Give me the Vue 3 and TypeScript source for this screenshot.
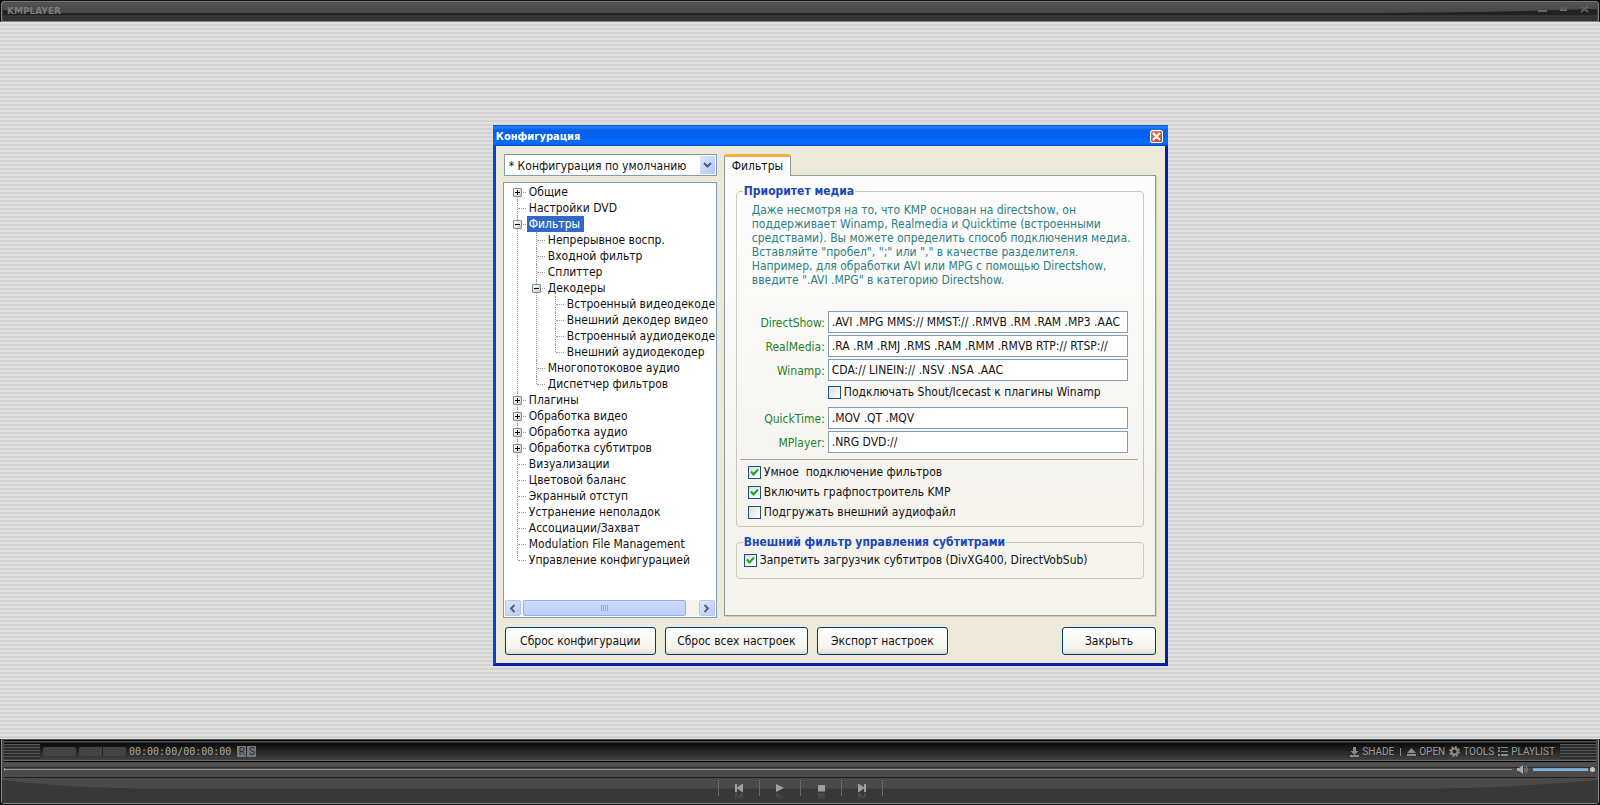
<script setup lang="ts">
import { ref, reactive } from 'vue'

interface TreeNode {
  label: string
  state?: 'open' | 'closed'
  selected?: boolean
  children?: TreeNode[]
}

const tree: TreeNode[] = [
  { label: 'Общие', state: 'closed' },
  { label: 'Настройки DVD' },
  {
    label: 'Фильтры',
    state: 'open',
    selected: true,
    children: [
      { label: 'Непрерывное воспр.' },
      { label: 'Входной фильтр' },
      { label: 'Сплиттер' },
      {
        label: 'Декодеры',
        state: 'open',
        children: [
          { label: 'Встроенный видеодекодер' },
          { label: 'Внешний декодер видео' },
          { label: 'Встроенный аудиодекодер' },
          { label: 'Внешний аудиодекодер' },
        ],
      },
      { label: 'Многопотоковое аудио' },
      { label: 'Диспетчер фильтров' },
    ],
  },
  { label: 'Плагины', state: 'closed' },
  { label: 'Обработка видео', state: 'closed' },
  { label: 'Обработка аудио', state: 'closed' },
  { label: 'Обработка субтитров', state: 'closed' },
  { label: 'Визуализации' },
  { label: 'Цветовой баланс' },
  { label: 'Экранный отступ' },
  { label: 'Устранение неполадок' },
  { label: 'Ассоциации/Захват' },
  { label: 'Modulation File Management' },
  { label: 'Управление конфигурацией' },
]

const media = reactive({
  directshow: '.AVI .MPG MMS:// MMST:// .RMVB .RM .RAM .MP3 .AAC',
  realmedia: '.RA .RM .RMJ .RMS .RAM .RMM .RMVB RTP:// RTSP://',
  winamp: 'CDA:// LINEIN:// .NSV .NSA .AAC',
  quicktime: '.MOV .QT .MQV',
  mplayer: '.NRG DVD://',
})
const shoutcast = ref(false)
const smart = ref(true)
const graph = ref(true)
const external = ref(false)
const blockLoader = ref(true)
const position = ref(0)
const volume = ref(100)
</script>

<template>
  <div class="player">
    <header class="topbar">
      <svg class="curve" viewBox="0 0 1600 20" preserveAspectRatio="none" aria-hidden="true">
        <path d="M0 9 Q30 12 60 12 H1330 Q1480 12 1600 8 V14 H0Z" fill="#222" />
        <path d="M0 14 H1600 V20 H0Z" fill="#333" />
      </svg>
      <span class="brand">KMPLAYER</span>
      <div class="winbtns">
        <button type="button" aria-label="Свернуть">
          <svg width="9" height="8" viewBox="0 0 9 8"><rect x="0" y="5" width="9" height="2" fill="#62666a" /></svg>
        </button>
        <button type="button" aria-label="Развернуть">
          <svg width="9" height="8" viewBox="0 0 9 8"><rect x="1" y="1" width="7" height="5" fill="#55595f" /><rect x="1" y="5" width="7" height="1" fill="#6b7076" /></svg>
        </button>
        <button type="button" aria-label="Выход">
          <svg width="9" height="8" viewBox="0 0 9 8"><path d="M1 1L8 7M8 1L1 7" stroke="#5e5e5e" stroke-width="2" /></svg>
        </button>
      </div>
    </header>

    <main class="stage">
      <section class="dialog" role="dialog" aria-labelledby="dlg-title">
        <div class="titlebar">
          <h1 id="dlg-title">Конфигурация</h1>
          <button type="button" class="close" aria-label="Закрыть окно">
            <svg width="9" height="9" viewBox="0 0 9 9"><path d="M1 1L8 8M8 1L1 8" stroke="#fff" stroke-width="2" /></svg>
          </button>
        </div>
        <div class="body">
          <div class="columns">
            <div class="side">
              <div class="combo">
                <select aria-label="Конфигурация">
                  <option>* Конфигурация по умолчанию</option>
                </select>
                <span class="drop">
                  <svg width="9" height="7" viewBox="0 0 9 7"><path d="M1 1L4.500 4.500L8 1" fill="none" stroke="#4d6185" stroke-width="2" /></svg>
                </span>
              </div>
              <nav class="treebox" aria-label="Разделы">
                <ul class="tree">
                  <li v-for="a in tree" :key="a.label">
                    <div class="row">
                      <button v-if="a.state" type="button" class="exp" :class="a.state" :aria-label="a.label + ': раскрыть'"></button>
                      <a href="#" :class="{ selected: a.selected }">{{ a.label }}</a>
                    </div>
                    <ul v-if="a.children">
                      <li v-for="b in a.children" :key="b.label">
                        <div class="row">
                          <button v-if="b.state" type="button" class="exp" :class="b.state" :aria-label="b.label + ': раскрыть'"></button>
                          <a href="#">{{ b.label }}</a>
                        </div>
                        <ul v-if="b.children">
                          <li v-for="c in b.children" :key="c.label">
                            <div class="row"><a href="#">{{ c.label }}</a></div>
                          </li>
                        </ul>
                      </li>
                    </ul>
                  </li>
                </ul>
                <div class="hscroll">
                  <button type="button" aria-label="Влево">
                    <svg width="7" height="9" viewBox="0 0 7 9"><path d="M5.500 1L2 4.500L5.500 8" fill="none" stroke="#4d6185" stroke-width="2" /></svg>
                  </button>
                  <div class="track"><div class="thumb"><i></i><i></i><i></i><i></i></div></div>
                  <button type="button" aria-label="Вправо">
                    <svg width="7" height="9" viewBox="0 0 7 9"><path d="M1.500 1L5 4.500L1.500 8" fill="none" stroke="#4d6185" stroke-width="2" /></svg>
                  </button>
                </div>
              </nav>
            </div>

            <div class="content">
              <div role="tablist" class="tabs">
                <button type="button" role="tab" aria-selected="true" class="tab">Фильтры</button>
              </div>
              <div class="page" role="tabpanel">
                <fieldset class="group media">
                  <legend>Приоритет медиа</legend>
                  <p class="hint">
                    Даже несмотря на то, что KMP основан на directshow, он<br />
                    поддерживает Winamp, Realmedia и Quicktime (встроенными<br />
                    средствами). Вы можете определить способ подключения медиа.<br />
                    Вставляйте "пробел", ";" или "," в качестве разделителя.<br />
                    Например, для обработки AVI или MPG с помощью Directshow,<br />
                    введите ".AVI .MPG" в категорию Directshow.
                  </p>
                  <div class="fields">
                    <label for="f-ds">DirectShow:</label>
                    <input id="f-ds" v-model="media.directshow" type="text" />
                    <label for="f-rm">RealMedia:</label>
                    <input id="f-rm" v-model="media.realmedia" type="text" />
                    <label for="f-wa">Winamp:</label>
                    <input id="f-wa" v-model="media.winamp" type="text" />
                    <label class="check shout"><input v-model="shoutcast" type="checkbox" />Подключать Shout/Icecast к плагины Winamp</label>
                    <label for="f-qt">QuickTime:</label>
                    <input id="f-qt" v-model="media.quicktime" type="text" />
                    <label for="f-mp">MPlayer:</label>
                    <input id="f-mp" v-model="media.mplayer" type="text" />
                  </div>
                  <hr />
                  <div class="checks">
                    <label class="check"><input v-model="smart" type="checkbox" />Умное&nbsp; подключение фильтров</label>
                    <label class="check"><input v-model="graph" type="checkbox" />Включить графпостроитель KMP</label>
                    <label class="check"><input v-model="external" type="checkbox" />Подгружать внешний аудиофайл</label>
                  </div>
                </fieldset>
                <fieldset class="group subs">
                  <legend>Внешний фильтр управления субтитрами</legend>
                  <label class="check"><input v-model="blockLoader" type="checkbox" />Запретить загрузчик субтитров (DivXG400, DirectVobSub)</label>
                </fieldset>
              </div>
            </div>
          </div>
          <div class="actions">
            <button type="button" class="xp reset">Сброс конфигурации</button>
            <button type="button" class="xp all">Сброс всех настроек</button>
            <button type="button" class="xp export">Экспорт настроек</button>
            <button type="button" class="xp done">Закрыть</button>
          </div>
        </div>
      </section>
    </main>

    <footer class="deck">
      <div class="display">
        <span class="grille"></span>
        <span class="pill"></span>
        <span class="pill split"></span>
        <span class="time">00:00:00/00:00:00</span>
        <span class="flag">R</span><span class="flag">S</span>
        <div class="menu">
          <button type="button">
            <svg width="9" height="10" viewBox="0 0 9 10"><path d="M3 0H6V4H8.500L4.500 8L.5 4H3ZM0 8H9V10H0Z" fill="#8a8a8a" /></svg>SHADE
          </button>
          <span class="bar"></span>
          <button type="button">
            <svg width="9" height="10" viewBox="0 0 9 10"><path d="M4.500 1L9 6H0ZM0 7H9V9H0Z" fill="#8a8a8a" /></svg>OPEN
          </button>
          <button type="button">
            <svg width="11" height="11" viewBox="0 0 11 11"><circle cx="5.500" cy="5.500" r="3" fill="none" stroke="#8a8a8a" stroke-width="2" /><circle cx="5.500" cy="5.500" r="4.600" fill="none" stroke="#8a8a8a" stroke-width="1.800" stroke-dasharray="1.900 1.710" /></svg>TOOLS
          </button>
          <button type="button">
            <svg width="10" height="9" viewBox="0 0 10 9"><path d="M0 0H2V2H0ZM3 0H10V1H3ZM0 3H2V5H0ZM3 4H10V5H3ZM0 7H2V9H0ZM3 7H10V9H3Z" fill="#8a8a8a" /></svg>PLAYLIST
          </button>
        </div>
        <span class="grille"></span>
      </div>
      <div class="seekrow">
        <input v-model="position" class="seek" type="range" min="0" max="100" aria-label="Позиция" />
        <svg class="spk" width="12" height="9" viewBox="0 0 12 9"><path d="M0 3H2L6 0V9L2 6H0Z" fill="#a8a8a8" /><path d="M7.500 2.500Q9 4.500 7.500 6.500M9 .8Q11.800 4.500 9 8.200" fill="none" stroke="#8f8f8f" /></svg>
        <input v-model="volume" class="vol" type="range" min="0" max="100" aria-label="Громкость" />
      </div>
      <div class="controls">
        <svg class="curve" viewBox="0 0 1600 26" preserveAspectRatio="none" aria-hidden="true">
          <path d="M0 2 Q70 11 160 11 H1410 Q1510 11 1600 2 V26 H0Z" fill="#383838" />
        </svg>
        <div class="transport">
          <button type="button" aria-label="Назад"><svg width="8" height="8" viewBox="0 0 8 8"><path d="M0 0H2V3.500L7 0H8V8H7L2 4.500V8H0Z" fill="#a0a0a0" /></svg></button>
          <button type="button" aria-label="Воспроизвести"><svg width="8" height="8" viewBox="0 0 8 8"><path d="M0 0L8 4L0 8Z" fill="#a0a0a0" /></svg></button>
          <button type="button" aria-label="Стоп"><svg width="8" height="8" viewBox="0 0 8 8"><path d="M1 1H8V7.500H1Z" fill="#a0a0a0" /></svg></button>
          <button type="button" aria-label="Вперёд"><svg width="8" height="8" viewBox="0 0 8 8"><path d="M8 0H6V3.500L1 0H0V8H1L6 4.500V8H8Z" fill="#a0a0a0" /></svg></button>
        </div>
      </div>
    </footer>
  </div>
</template>

<style>
body {
  margin: 0;
  background: #000;
}
</style>

<style scoped>
* {
  box-sizing: border-box;
}
button,
input,
select {
  font: inherit;
  color: inherit;
  margin: 0;
  padding: 0;
  border: 0;
  background: none;
}
.player {
  display: flex;
  flex-direction: column;
  height: 100vh;
  min-height: 720px;
  font: 12px/16px 'DejaVu Sans Condensed', 'DejaVu Sans', sans-serif;
  color: #111;
}

/* Top bar */
.topbar {
  position: relative;
  display: flex;
  flex: none;
  align-items: center;
  justify-content: space-between;
  height: 22px;
  padding: 0 10px 0 6px;
  background: linear-gradient(#545454, #454545 14px);
  border-top: 1px solid #111;
  border-left: 1px solid #111;
  border-right: 1px solid #111;
  box-shadow: inset 1px 1px #777, inset -1px 0 #777;
  border-bottom: 1px solid #888;
  border-radius: 4px 4px 0 0;
}
.curve {
  position: absolute;
  inset: 0 2px;
  width: calc(100% - 4px);
  height: 100%;
}
.brand {
  position: relative;
  font: bold 9px/12px 'DejaVu Sans', sans-serif;
  color: #7d7d7d;
}
.winbtns {
  position: relative;
  display: flex;
  gap: 12px;
}
.winbtns button {
  display: flex;
  padding-bottom: 4px;
}

/* Stage */
.stage {
  position: relative;
  flex: 1;
  background: repeating-linear-gradient(#dfdfdf 0 2px, #d2d2d2 2px 4px);
}
.dialog {
  position: absolute;
  top: 103px;
  left: 30.8%;
  width: 42.2%;
  min-width: 675px;
  background: #ece9d8;
  border: 3px solid #0842d0;
  border-top: 0;
  border-right-color: #0420a8;
  border-bottom-color: #0420a8;
}
.titlebar {
  display: flex;
  align-items: center;
  justify-content: space-between;
  height: 21px;
  margin: 0 -3px;
  padding: 2px 5px 0 3px;
  background: linear-gradient(#0a4cc8, #2a80f8 2px, #0560ea 5px, #0461f0 12px, #0670ff 18px, #0448c4);
}
h1 {
  margin: 0;
  font-size: 11px;
  line-height: 16px;
  font-weight: bold;
  color: #fff;
}
.close {
  display: grid;
  place-items: center;
  width: 13px;
  height: 13px;
  border: 1px solid #fff;
  border-radius: 2px;
  background: linear-gradient(135deg, #d98770, #c0412a);
}
.body {
  padding: 8px 9px 8px 7px;
}
.columns {
  display: flex;
  gap: 7px;
}
.side {
  display: flex;
  flex-direction: column;
  flex: 0 0 214px;
  gap: 6px;
  min-width: 0;
}
.combo {
  position: relative;
  margin-left: 1px;
}
.combo select {
  display: block;
  width: 100%;
  height: 22px;
  padding: 1px 20px 0 4px;
  appearance: none;
  background: #fff;
  border: 1px solid #7f9db9;
}
.drop {
  position: absolute;
  top: 2px;
  right: 2px;
  bottom: 2px;
  display: grid;
  place-items: center;
  width: 15px;
  background: linear-gradient(135deg, #dce6fd, #b3c7f5);
  border-radius: 1px;
  pointer-events: none;
}
.treebox {
  display: flex;
  flex: 1;
  flex-direction: column;
  justify-content: space-between;
  padding: 1px 1px 1px;
  background: #fff;
  border: 1px solid #7f9db9;
  overflow: hidden;
}
.tree,
.tree ul {
  margin: 0;
  padding: 0;
  list-style: none;
}
.tree {
  padding: 0 0 0 3px;
  overflow: hidden;
}
.tree ul {
  padding-left: 19px;
}
.tree li {
  position: relative;
}
.tree li::before {
  content: '';
  position: absolute;
  top: 0;
  bottom: 0;
  left: 9px;
  border-left: 1px dotted #999;
}
.tree > li:first-child::before {
  top: 8px;
}
.tree li:last-child::before {
  bottom: auto;
  height: 8px;
}
.row {
  position: relative;
  display: flex;
  height: 16px;
  padding-left: 19px;
  white-space: nowrap;
}
.row::before {
  content: '';
  position: absolute;
  top: 8px;
  left: 10px;
  width: 8px;
  border-top: 1px dotted #999;
}
.row a {
  padding: 0 4px 0 2px;
  color: #111;
  text-decoration: none;
}
.row a.selected {
  background: #316ac5;
  color: #fff;
}
.exp {
  position: absolute;
  top: 4px;
  left: 5px;
  z-index: 1;
  width: 9px;
  height: 9px;
  border: 1px solid #7b8ca0;
  border-radius: 1px;
  background:
    linear-gradient(#000, #000) center / 5px 1px no-repeat,
    linear-gradient(135deg, #fff, #d0ccc0);
}
.exp.closed {
  background:
    linear-gradient(#000, #000) center / 5px 1px no-repeat,
    linear-gradient(#000, #000) center / 1px 5px no-repeat,
    linear-gradient(135deg, #fff, #d0ccc0);
}
.hscroll {
  display: flex;
  gap: 2px;
  height: 16px;
  background: #f4f3ee;
}
.hscroll button {
  display: grid;
  place-items: center;
  flex: 0 0 16px;
  border: 1px solid #b4c8f0;
  border-radius: 2px;
  background: linear-gradient(135deg, #dce6fd, #b9cbf6);
}
.track {
  flex: 1;
}
.thumb {
  display: flex;
  align-items: center;
  justify-content: center;
  gap: 1px;
  width: 94%;
  height: 16px;
  border: 1px solid #98b0e0;
  border-radius: 2px;
  background: linear-gradient(#cbdafd, #bccefa);
}
.thumb i {
  width: 1px;
  height: 6px;
  background: #8fa8e0;
}

/* Tab and page */
.content {
  display: flex;
  flex: 1;
  flex-direction: column;
  min-width: 0;
  padding-bottom: 2px;
}
.tabs {
  display: flex;
}
.tab {
  position: relative;
  z-index: 1;
  height: 22px;
  margin-bottom: -1px;
  padding: 0 7px 2px;
  border: 1px solid #919b9c;
  border-top: 3px solid #f0b040;
  border-bottom: 0;
  border-radius: 3px 3px 0 0;
  background: #fdfdfc;
}
.page {
  padding: 7px 11px 36px;
  border: 1px solid #919b9c;
  background: linear-gradient(#fdfdfe, #f4f3ee 75%);
  box-shadow: 1px 1px #d0cdbf;
}
.group {
  min-width: 0;
  margin: 0;
  padding: 0;
  border: 1px solid #c9c8bd;
  border-radius: 4px;
}
legend {
  margin-left: 6px;
  padding: 0 1px;
  font-weight: bold;
  color: #1a46b8;
}
.hint {
  margin: 4px 0 24px 15px;
  line-height: 14px;
  color: #2b8080;
  white-space: nowrap;
}
.fields {
  display: grid;
  grid-template-columns: 88px 1fr;
  gap: 2px 3px;
  margin-right: 15px;
}
.fields > label {
  color: #268026;
  line-height: 24px;
  height: 22px;
  text-align: right;
}
.fields input[type='text'] {
  width: 100%;
  min-width: 0;
  height: 22px;
  padding: 0 3px 1px;
  border: 1px solid #7f9db9;
  background: #fff;
}
.check {
  display: flex;
  align-items: center;
  gap: 3px;
  height: 20px;
  white-space: nowrap;
}
.fields > .check {
  grid-column: 2;
  height: 18px;
  margin-bottom: 4px;
  line-height: 16px;
  color: #111;
}
.check input {
  flex: none;
  width: 13px;
  height: 13px;
  appearance: none;
  border: 1px solid #1c5180;
  background: linear-gradient(135deg, #dcdcd7, #fff);
}
.check input:checked {
  background:
    url("data:image/svg+xml,%3Csvg xmlns='http://www.w3.org/2000/svg' viewBox='0 0 11 11'%3E%3Cpath d='M2 4.500L4.500 7.500L9 2.500' fill='none' stroke='%2321a121' stroke-width='2'/%3E%3C/svg%3E"),
    linear-gradient(135deg, #dcdcd7, #fff);
}
hr {
  margin: 6px 5px 2px 3px;
  border: 0;
  border-top: 1px solid #aca899;
}
.checks {
  padding: 0 0 4px 11px;
}
.subs {
  margin-top: 7px;
  padding: 0 0 8px 7px;
}
.subs legend {
  margin-left: -1px;
}

/* Dialog buttons */
.actions {
  display: flex;
  gap: 9px;
  padding: 9px 0 0 2px;
}
.xp {
  height: 28px;
  border: 1px solid #003c74;
  border-radius: 3px;
  background: linear-gradient(#fff, #f3f2ec 80%, #dedacb);
}
.reset {
  width: 151px;
}
.all {
  width: 143px;
}
.export {
  width: 131px;
}
.done {
  width: 94px;
  margin-left: auto;
}

/* Deck */
.deck {
  flex: none;
  padding: 0 3px;
  background: #4a4a4a;
  border: 1px solid #111;
  border-top: 0;
  border-radius: 0 0 4px 4px;
  box-shadow: inset 1px -1px #888, inset -1px 0 #888;
  color: #9a9a9a;
}
.display {
  display: flex;
  align-items: center;
  height: 23px;
  padding-top: 2px;
  border-top: 1px solid #555;
  border-bottom: 1px solid #000;
  background: linear-gradient(#000 0 1px, #555 1px 2px, #080a09 3px, #424242 20px, #6a6a6a 20px);
}
.grille {
  width: 36px;
  height: 15px;
  background: repeating-linear-gradient(#555 0 1px, #2d2d2d 1px 3px);
}
.pill {
  width: 33px;
  height: 9px;
  margin-left: 3px;
  border-radius: 2px;
  background: #434343;
}
.split {
  width: 47px;
  background: linear-gradient(90deg, #434343 23px, #222 23px 24px, #434343 24px);
}
.time {
  margin: 0 6px 0 3px;
  font: 10px/12px 'DejaVu Sans Mono', monospace;
  color: #aaa;
}
.flag {
  width: 9px;
  height: 11px;
  margin-right: 1px;
  background: #777;
  color: #2a2a2a;
  font: 10px/11px Roboto, sans-serif;
  text-align: center;
}
.menu {
  display: flex;
  align-items: center;
  gap: 4px;
  margin: 0 5px 0 auto;
  font: 10px/12px Roboto, sans-serif;
}
.menu button {
  display: flex;
  align-items: center;
  gap: 3px;
}
.bar {
  width: 1px;
  height: 8px;
  margin: 0 2px;
  background: #888;
}
.seekrow {
  display: flex;
  align-items: center;
  height: 16px;
  padding-right: 1px;
  border-bottom: 1px solid #222;
  background: linear-gradient(#4f4f4f 5px, #2d2d2d 5px 6px, #4a4a4a 6px);
}
.seek,
.vol {
  height: 9px;
  appearance: none;
}
.seek {
  flex: 1;
  background: linear-gradient(#999, #999) center / 100% 1px no-repeat;
}
.seek::-webkit-slider-thumb {
  appearance: none;
  width: 1px;
  height: 3px;
  background: #999;
}
.spk {
  margin: 0 4px 0 5px;
}
.vol {
  width: 62px;
  background: linear-gradient(#6f9fc0, #8db9d8) left center / 55px 3px no-repeat;
}
.vol::-webkit-slider-thumb {
  appearance: none;
  width: 5px;
  height: 5px;
  border-radius: 50%;
  background: #c4c8ca;
}
.controls {
  position: relative;
  display: flex;
  justify-content: center;
  height: 26px;
}
.controls .curve {
  inset: 0 -2px 1px;
  width: calc(100% + 4px);
  height: 25px;
}
.transport {
  position: relative;
  display: flex;
  margin: 2px 0 8px;
  border-right: 1px solid #686868;
}
.transport button {
  display: grid;
  place-items: center;
  width: 41px;
  border-left: 1px solid #686868;
}
.transport svg {
  -webkit-box-reflect: below 1px linear-gradient(transparent 10%, rgba(0, 0, 0, 0.25));
}
</style>
